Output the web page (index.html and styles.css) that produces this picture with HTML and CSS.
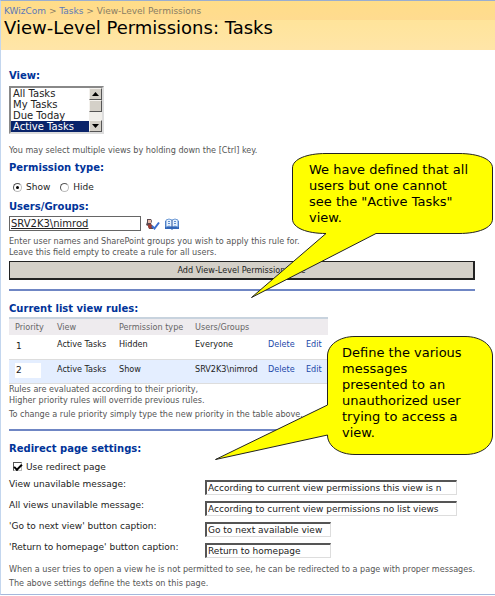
FILE: index.html
```
<!DOCTYPE html>
<html lang="en">
<head>
    <meta charset="UTF-8">
    <meta name="viewport" content="width=device-width, initial-scale=1.0">
    <title>View-Level Permissions: Tasks</title>
    <link rel="stylesheet" href="styles.css">
</head>
<body>
    <header class="page-header">
        <nav class="breadcrumb">
            <a href="#">KWizCom</a> &gt; <a href="#">Tasks</a> &gt; <span>View-Level Permissions</span>
        </nav>
        <h1>View-Level Permissions: Tasks</h1>
    </header>

    <main class="content">
        <form class="rule-form">
            <label class="title" for="views">View:</label>
            <div class="listbox">
                <select id="views" size="4" multiple>
                    <option>All Tasks</option>
                    <option>My Tasks</option>
                    <option>Due Today</option>
                    <option class="picked">Active Tasks</option>
                </select>
                <div class="scroll" aria-hidden="true">
                    <span class="scroll-btn"><svg width="7" height="4" viewBox="0 0 7 4"><path d="M0 4L3.500 0L7 4z"/></svg></span>
                    <span class="scroll-btn"></span>
                    <span class="scroll-track"></span>
                    <span class="scroll-btn"><svg width="7" height="4" viewBox="0 0 7 4"><path d="M0 0L3.500 4L7 0z"/></svg></span>
                </div>
            </div>
            <p class="hint">You may select multiple views by holding down the [Ctrl] key.</p>

            <h2 class="title type-title">Permission type:</h2>
            <div class="radios">
                <label><input type="radio" name="ptype" checked> Show</label>
                <label><input type="radio" name="ptype"> Hide</label>
            </div>

            <label class="title" for="users">Users/Groups:</label>
            <div class="people">
                <input type="text" id="users" value="SRV2K3\nimrod" spellcheck="false">
                <a href="#" title="Check names">
                    <svg width="14" height="12" viewBox="0 0 14 12">
                        <path d="M1 1h4l1 2-1 3 2 2v3H3L2 8 0 7l1-3z" fill="#5b4a50"/>
                        <path d="M2 2h3v3H2z" fill="#e9b9a8"/>
                        <path d="M2 7l3-1 1 3-2 2-2-2z" fill="#a33c35"/>
                        <path d="M6 8l2.500 2.500L13 4.500" fill="none" stroke="#3a6fd0" stroke-width="2"/>
                    </svg>
                </a>
                <a href="#" title="Browse">
                    <svg width="14" height="12" viewBox="0 0 14 12">
                        <path d="M0 3h14v8H8l-1 1-1-1H0z" fill="#3266b8"/>
                        <path d="M1 2l3-1 3 1 3-1 3 1v7l-3-1-3 1-3-1-3 1z" fill="#e6f1fd" stroke="#6f9bd6"/>
                        <path d="M7 2v8" stroke="#24509c"/>
                        <path d="M3 3.500h2M3 5.500h2M9 3.500h2M9 5.500h2" stroke="#5f8fd0"/>
                    </svg>
                </a>
            </div>
            <p class="hint">Enter user names and SharePoint groups you wish to apply this rule for.<br>Leave this field empty to create a rule for all users.</p>
            <button type="button" class="add-btn">Add View-Level Permission Rule</button>
        </form>

        <section class="block">
            <h2 class="title">Current list view rules:</h2>
            <table class="rules">
                <thead>
                    <tr>
                        <th class="col-priority">Priority</th>
                        <th class="col-view">View</th>
                        <th class="col-type">Permission type</th>
                        <th class="col-users">Users/Groups</th>
                        <th class="col-delete"></th>
                        <th class="col-edit"></th>
                    </tr>
                </thead>
                <tbody>
                    <tr>
                        <td><input type="text" value="1" aria-label="Priority"></td>
                        <td>Active Tasks</td>
                        <td>Hidden</td>
                        <td>Everyone</td>
                        <td><a href="#">Delete</a></td>
                        <td><a href="#">Edit</a></td>
                    </tr>
                    <tr>
                        <td><input type="text" value="2" aria-label="Priority"></td>
                        <td>Active Tasks</td>
                        <td>Show</td>
                        <td>SRV2K3\nimrod</td>
                        <td><a href="#">Delete</a></td>
                        <td><a href="#">Edit</a></td>
                    </tr>
                </tbody>
            </table>
            <p class="hint">Rules are evaluated according to their priority,<br>Higher priority rules will override previous rules.</p>
            <p class="hint spaced">To change a rule priority simply type the new priority in the table above.</p>
        </section>

        <section class="block">
            <h2 class="title">Redirect page settings:</h2>
            <label class="check"><input type="checkbox" checked> Use redirect page</label>
            <div class="fields">
                <label for="msg-view">View unavilable message:</label>
                <input type="text" id="msg-view" value="According to current view permissions this view is n">
                <label for="msg-all">All views unavilable message:</label>
                <input type="text" id="msg-all" value="According to current view permissions no list views">
                <label for="cap-next">'Go to next view' button caption:</label>
                <input type="text" id="cap-next" class="short" value="Go to next available view">
                <label for="cap-home">'Return to homepage' button caption:</label>
                <input type="text" id="cap-home" class="short" value="Return to homepage">
            </div>
            <p class="hint">When a user tries to open a view he is not permitted to see, he can be redirected to a page with proper messages.</p>
            <p class="hint spaced">The above settings define the texts on this page.</p>
        </section>
    </main>

    <!-- callouts lie over the page -->
    <aside class="callout callout-rules">
        <svg width="243" height="146" viewBox="0 0 243 146">
            <path d="M75 80.500C56 80.500 41.500 75 41.500 66V15C41.500 6 56 .5 75 .5H208C227 .5 241.500 6 241.500 15V66C241.500 75 227 80.500 208 80.500H125L.5 144.500z"/>
        </svg>
        <p>We have defined that all<br>users but one cannot<br>see the "Active Tasks"<br>view.</p>
    </aside>
    <aside class="callout callout-redirect">
        <svg width="279" height="140" viewBox="0 0 279 140">
            <path d="M112.500 69V20C112.500 9 124 .5 140 .5H250C266 .5 277.500 9 277.500 20V99C277.500 110 266 118.500 250 118.500H140C124 118.500 112.500 110 112.500 99L.5 123.500z"/>
        </svg>
        <p>Define the various<br>messages<br>presented to an<br>unauthorized user<br>trying to access a<br>view.</p>
    </aside>
</body>
</html>
```
FILE: styles.css
```
* {
    box-sizing: border-box;
}

body {
    position: relative;
    margin: 0;
    border-top: 1px solid #9aaed0;
    border-left: 1px solid #c3d6ee;
    border-bottom: 1px solid #a5b8dc;
    background-color: #fff;
    color: #222;
    font-family: "DejaVu Sans", Verdana, sans-serif;
    font-size: 9px;
    line-height: 12px;
}

h1, h2, p {
    margin: 0;
}

a {
    color: #1b47a8;
    text-decoration: none;
}

.page-header {
    height: 49px;
    padding: 4px 3px;
    background: linear-gradient(#ffdd88 0, #ffdb90 19px, #ffe49a 19px, #ffe5a8 100%);
}

.breadcrumb {
    color: #8a7d64;
}

.breadcrumb a {
    color: #5d7ab8;
}

h1 {
    color: #000;
    font-size: 18px;
    font-weight: normal;
    line-height: 22px;
}

.content {
    padding: 20px 20px 5px 8px;
}

.title {
    display: block;
    color: #003399;
    font-size: 10px;
    font-weight: bold;
    line-height: 12px;
}

.type-title {
    margin-top: 6px;
}

.hint {
    color: #555;
    font-family: "DejaVu Sans Condensed", Tahoma, sans-serif;
    font-size: 9px;
    line-height: 11px;
    white-space: nowrap;
}

.spaced {
    margin-top: 3px;
}

/* list box */
.listbox {
    display: flex;
    width: 95px;
    height: 48px;
    margin: 4px 0 11px;
    border: 2px solid;
    border-color: #888 #ddd #ddd #888;
}

.listbox select {
    flex: 1;
    min-width: 0;
    padding: 0;
    border: 0;
    outline: 0;
    border-radius: 0;
    background-color: #fff;
    color: #222;
    font: 10px "DejaVu Sans", sans-serif;
    overflow: hidden;
    scrollbar-width: none;
}

.listbox option {
    min-height: 11px;
    padding: 0 2px;
    line-height: 11px;
}

.listbox .picked {
    background-color: #0a246a;
    color: #fff;
}

.scroll {
    display: flex;
    flex-direction: column;
    width: 13px;
    background-color: #f0eeea;
}

.scroll-btn {
    display: flex;
    align-items: center;
    justify-content: center;
    height: 12px;
    border: 1px solid;
    border-color: #f4f2ee #555 #555 #f4f2ee;
    background-color: #d4d0c8;
}

.scroll-track {
    flex: 1;
}

/* radios and checkbox */
.radios {
    display: flex;
    gap: 10px;
    margin: 7px 0 8px;
    padding-left: 4px;
}

.radios label, .check {
    display: flex;
    align-items: center;
    gap: 4px;
}

input[type="radio"], input[type="checkbox"] {
    appearance: none;
    display: grid;
    place-items: center;
    width: 9px;
    height: 9px;
    margin: 0;
    border: 1px solid;
    border-color: #555 #bbb #bbb #555;
    background-color: #fff;
}

input[type="radio"] {
    border-radius: 50%;
}

input[type="radio"]:checked::before {
    content: "";
    width: 3px;
    height: 3px;
    border-radius: 50%;
    background-color: #000;
}

input[type="checkbox"]:checked::before {
    content: "";
    width: 6px;
    height: 3px;
    border: solid #000;
    border-width: 0 0 2px 2px;
    transform: rotate(-45deg);
}

input[type="text"] {
    height: 15px;
    padding: 0 1px;
    border: 1px solid;
    border-color: #555 #ddd #ddd #555;
    border-top-width: 2px;
    border-left-width: 2px;
    border-radius: 0;
    background-color: #fff;
    color: #222;
    font: 9px "DejaVu Sans", sans-serif;
}

.people {
    display: flex;
    align-items: center;
    gap: 5px;
    margin: 3px 0 5px;
}

.people a {
    display: flex;
}

input#users {
    width: 132px;
    border: 1px solid #666;
    font-size: 10px;
    text-decoration: underline;
}

.add-btn {
    display: block;
    width: 100%;
    height: 19px;
    margin-top: 3px;
    padding: 0;
    border: 1px solid #222;
    border-right-width: 2px;
    border-bottom-width: 2px;
    border-radius: 0;
    background-color: #d4d0c8;
    color: #222;
    font: 9px "DejaVu Sans Condensed", Tahoma, sans-serif;
}

.block {
    margin-top: 9px;
    padding-top: 12px;
    border-top: 2px solid #6f86c4;
}

/* rules table */
.rules {
    width: 319px;
    margin-top: 2px;
    border-collapse: collapse;
    table-layout: fixed;
    font-family: "DejaVu Sans Condensed", Tahoma, sans-serif;
    font-size: 9px;
}

.rules th {
    height: 17px;
    padding: 0 0 0 6px;
    border-top: 2px solid #c8d3de;
    background-color: #eeebee;
    color: #666;
    font-weight: normal;
    text-align: left;
}

.rules td {
    height: 24px;
    padding: 3px 0 0 6px;
    border-bottom: 1px solid #ddd;
    vertical-align: top;
}

.rules tbody tr:nth-child(even) {
    background-color: #e4eeff;
}

.rules input[type="text"] {
    width: 26px;
    border: 0;
}

.col-priority { width: 42px; }
.col-view { width: 62px; }
.col-type { width: 76px; }
.col-users { width: 73px; }
.col-delete { width: 38px; }

.check {
    margin: 6px 0 5px;
    padding-left: 4px;
}

/* redirect settings */
.fields {
    display: grid;
    grid-template-columns: 196px 252px;
    grid-auto-rows: 17px;
    row-gap: 4px;
    margin-bottom: 6px;
}

.fields input {
    align-self: end;
}

.fields .short {
    width: 126px;
}

/* callouts */
.callout {
    position: absolute;
    color: #000;
    font-size: 13px;
    line-height: 16px;
}

.callout svg {
    display: block;
    fill: #ffff00;
    stroke: #222;
}

.callout p {
    position: absolute;
    white-space: nowrap;
}

.callout-rules {
    top: 152px;
    left: 250px;
}

.callout-rules p {
    top: 9px;
    left: 58px;
}

.callout-redirect {
    top: 335px;
    left: 214px;
}

.callout-redirect p {
    top: 9px;
    left: 127px;
}
```
